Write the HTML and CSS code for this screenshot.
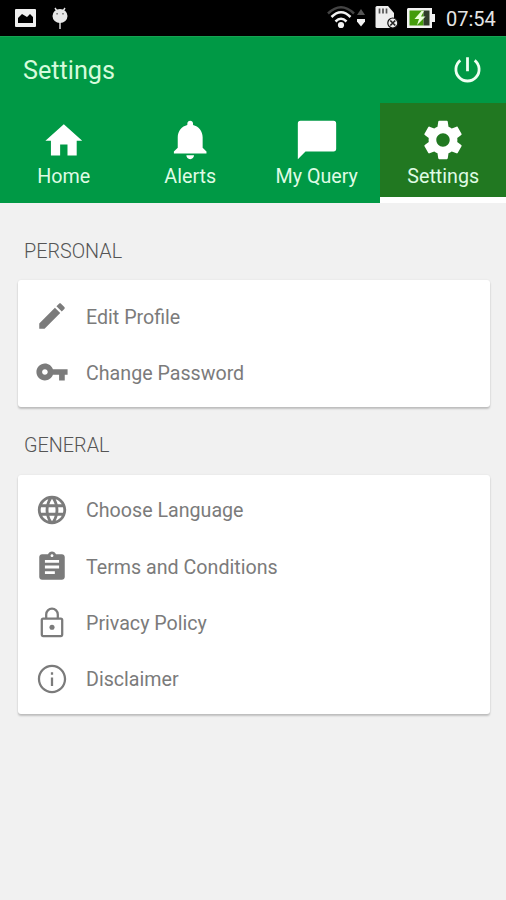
FILE: index.html
```html
<!DOCTYPE html>
<html lang="en">
<head>
<meta charset="utf-8">
<title>Settings</title>
<link rel="stylesheet" href="styles.css">
</head>
<body>
<div class="status">
  <svg class="s-image" width="21" height="18" viewBox="0 0 21 18"><path fill="#f0f0f0" fill-rule="evenodd" d="M1 0h19q1 0 1 1v16q0 1-1 1H1q-1 0-1-1V1q0-1 1-1zM3 14h15V8l-3-3-3 3-5-3-4 4z"/></svg>
  <svg class="s-droid" width="16" height="23" viewBox="0 0 16 23"><g stroke="#e8e8e8" stroke-width="1.400"><path d="M3 1l2 3M13 1l-2 3M8 15v7"/></g><ellipse cx="8" cy="9" rx="7.500" ry="7" fill="#e8e8e8"/><path fill="#777" d="M4.300 6h1.600v1.600H4.300zM10.200 6h1.600v1.600h-1.600z"/></svg>
  <span class="spacer"></span>
  <svg class="s-wifi" width="28" height="24" viewBox="0 0 28 24" fill="none" stroke-width="2.500"><path stroke="#444" d="M1 8.500Q14-4 27 8.500"/><path stroke="#f2f2f2" d="M4.500 12Q14 2.500 23.500 12M8.500 16.500Q14 11 19.500 16.500"/><circle cx="14" cy="20" r="3.100" fill="#f2f2f2"/></svg>
  <svg class="s-arrows" width="8" height="18" viewBox="0 0 8 18"><path fill="#555" d="M4 0l4 6H0z"/><path fill="#f2f2f2" d="M0 10h8v2.500L4 17.500 0 12.500z"/></svg>
  <svg class="s-sim" width="24" height="23" viewBox="0 0 24 23"><path fill="#eee" d="M2 0h11l6 7v15H2q-1.500 0-1.500-1.500V1.500Q.5 0 2 0z"/><path stroke="#555" stroke-width="1.700" d="M4.500 2.500v5M8 2.500v5M11.500 2.500v5"/><circle cx="17.800" cy="17" r="5" fill="#eee" stroke="#111" stroke-width="1.200"/><path stroke="#222" stroke-width="1.700" d="M15.300 14.500l5 5m0-5l-5 5"/></svg>
  <svg class="s-battery" width="29" height="20" viewBox="0 0 29 20"><path fill="#f2f2f2" d="M1 0h24v6h3v8h-3v6H0V1z"/><path fill="#449c0c" d="M2.500 2.500h14v15h-14z"/><path fill="#303d2b" d="M16.500 2.500h6v15h-6z"/><path fill="#eaffda" d="M14.500 3l-7 8h4.500l-2 6 8.500-8.500H14L17 3z"/></svg>
  <span class="clock">07:54</span>
</div>
<header class="bar">
  <h1>Settings</h1>
  <svg class="power" viewBox="0 0 28 28" fill="none" stroke="#effff2" stroke-width="2.800"><path d="M14 1.200v14M6.800 4.300a11.600 11.600 0 1 0 14.400 0"/></svg>
</header>
<nav class="tabs">
  <a class="tab"><svg viewBox="-.4 -.9 25 25"><path d="M10 20v-6h4v6h5v-8h3L12 3 2 12h3v8z"/></svg><span>Home</span></a>
  <a class="tab"><svg viewBox="-.6 0 24 24"><path d="M11.500 22c1.100 0 2-.9 2-2h-4c0 1.100.9 2 2 2zm6.500-6v-5.500c0-3.070-2.130-5.640-5-6.320V3.500c0-.83-.67-1.500-1.500-1.500S10 2.670 10 3.500v.68c-2.870.68-5 3.250-5 6.320V16l-2 2v1h17v-1z"/></svg><span>Alerts</span></a>
  <a class="tab"><svg viewBox="0 0 24 24"><path d="M20.600 2H3.400Q2 2 2 3.400V22l4-4h14.600q1.400 0 1.400-1.400V3.400Q22 2 20.600 2z"/></svg><span>My Query</span></a>
  <a class="tab active"><svg viewBox="0 0 24 24"><path d="M19.430 12.980c.04-.32.07-.64.07-.98s-.03-.66-.07-.98l2.110-1.650c.19-.15.24-.42.12-.64l-2-3.460c-.12-.22-.39-.3-.61-.22l-2.490 1c-.52-.4-1.080-.73-1.690-.98l-.38-2.650C14.460 2.180 14.250 2 14 2h-4c-.25 0-.46.18-.49.42l-.38 2.650c-.61.25-1.170.59-1.690.98l-2.490-1c-.23-.09-.49 0-.61.22l-2 3.460c-.13.22-.07.49.12.64l2.110 1.650c-.04.32-.07.65-.07.98s.03.66.07.98l-2.110 1.650c-.19.15-.24.42-.12.64l2 3.460c.12.22.39.3.61.22l2.490-1c.52.4 1.080.73 1.690.98l.38 2.650c.03.24.24.42.49.42h4c.25 0 .46-.18.49-.42l.38-2.650c.61-.25 1.170-.59 1.690-.98l2.490 1c.23.09.49 0 .61-.22l2-3.460c.12-.22.07-.49-.12-.64zM12 15.500c-1.930 0-3.500-1.570-3.500-3.500s1.570-3.500 3.500-3.500 3.500 1.570 3.500 3.500-1.570 3.500-3.500 3.500z"/></svg><span>Settings</span></a>
</nav>
<main>
  <h2>PERSONAL</h2>
  <ul class="card profile">
    <li><svg viewBox="0 0 24 24"><path d="M3 17.250V21h3.750L17.810 9.940l-3.750-3.750zM20.710 7.040c.39-.39.39-1.020 0-1.410l-2.340-2.340c-.39-.39-1.020-.39-1.410 0l-1.830 1.830 3.750 3.750z"/></svg><span>Edit Profile</span></li>
    <li><svg viewBox="0 0 24 24"><path d="M12.650 10C11.830 7.670 9.610 6 7 6c-3.310 0-6 2.690-6 6s2.690 6 6 6c2.610 0 4.830-1.670 5.650-4H17v4h4v-4h2v-4zM7 14c-1.100 0-2-.9-2-2s.9-2 2-2 2 .9 2 2-.9 2-2 2z"/></svg><span>Change Password</span></li>
  </ul>
  <h2>GENERAL</h2>
  <ul class="card">
    <li><svg viewBox="0 0 24 24"><path d="M11.990 2C6.470 2 2 6.480 2 12s4.470 10 9.990 10C17.520 22 22 17.520 22 12S17.520 2 11.990 2zm6.930 6h-2.950c-.32-1.250-.78-2.450-1.380-3.560 1.840.63 3.370 1.910 4.330 3.560zM12 4.040c.83 1.200 1.480 2.530 1.910 3.960h-3.820c.43-1.430 1.080-2.760 1.910-3.960zM4.260 14C4.100 13.360 4 12.690 4 12s.1-1.360.26-2h3.380c-.08.66-.14 1.320-.14 2s.06 1.340.14 2zm.82 2h2.950c.32 1.250.78 2.450 1.380 3.560-1.840-.63-3.370-1.900-4.330-3.560zm2.950-8H5.080c.96-1.660 2.490-2.930 4.330-3.560C8.810 5.550 8.350 6.750 8.030 8zM12 19.960c-.83-1.200-1.480-2.530-1.910-3.960h3.820c-.43 1.430-1.080 2.760-1.910 3.960zM14.340 14H9.660c-.09-.66-.16-1.320-.16-2s.07-1.350.16-2h4.680c.09.65.16 1.320.16 2s-.07 1.340-.16 2zm.25 5.560c.6-1.110 1.060-2.310 1.380-3.560h2.950c-.96 1.650-2.490 2.930-4.330 3.560zM16.360 14c.08-.66.14-1.320.14-2s-.06-1.340-.14-2h3.380c.16.64.26 1.310.26 2s-.1 1.360-.26 2z"/></svg><span>Choose Language</span></li>
    <li><svg viewBox="0 0 24 24"><path d="M19 3h-4.180C14.400 1.840 13.300 1 12 1c-1.300 0-2.400.84-2.820 2H5c-1.100 0-2 .9-2 2v14c0 1.100.9 2 2 2h14c1.100 0 2-.9 2-2V5c0-1.100-.9-2-2-2zm-7 0c.55 0 1 .45 1 1s-.45 1-1 1-1-.45-1-1 .45-1 1-1zm2 14H7v-2h7zm3-4H7v-2h10zm0-4H7V7h10z"/></svg><span>Terms and Conditions</span></li>
    <li><svg viewBox="0 0 24 24"><g fill="none" stroke="#7b7b7b" stroke-width="1.600"><rect x="4.800" y="8.900" width="14.400" height="12.300" rx="1"/><path d="M7.900 9V6a4.100 4.100 0 0 1 8.200 0v3"/></g><circle cx="12" cy="15" r="1.800"/></svg><span>Privacy Policy</span></li>
    <li><svg viewBox="0 0 24 24"><path d="M11.200 17h1.600v-6h-1.600zM12 2C6.480 2 2 6.480 2 12s4.480 10 10 10 10-4.480 10-10S17.520 2 12 2zm0 18.400c-4.640 0-8.400-3.760-8.400-8.400S7.360 3.600 12 3.600s8.400 3.760 8.400 8.400-3.760 8.400-8.400 8.400zM11.200 9h1.600V7.200h-1.600z"/></svg><span>Disclaimer</span></li>
  </ul>
</main>
</body>
</html>
```
FILE: styles.css
```css
* { box-sizing: border-box; }
body {
  margin: 0;
  height: 900px;
  overflow: hidden;
  background: #f1f1f1;
  font-family: Roboto, "Liberation Sans", sans-serif;
}
svg { display: block; flex: none; }
.status {
  height: 36px;
  background: #000;
  display: flex;
  align-items: flex-start;
  padding: 0 10px 0 15px;
}
.s-image { margin-top: 9px; }
.s-droid { margin: 7px 0 0 16px; }
.spacer { flex: 1; }
.s-wifi { margin-top: 5px; }
.s-arrows { margin: 9px 0 0 2px; }
.s-sim { margin: 6px 0 0 10px; }
.s-battery { margin: 8px 0 0 8px; }
.clock {
  width: 50px;
  margin-left: 10px;
  color: #e4e4e4;
  font-size: 20px;
  line-height: 38px;
  white-space: nowrap;
}
.bar {
  height: 67px;
  background: #009945;
  border-top: 1px solid #16a352;
  display: flex;
  align-items: center;
  justify-content: space-between;
  padding: 0 24px 0 23px;
}
h1 {
  margin: 1px 0 0;
  font-size: 25.200px;
  font-weight: 400;
  line-height: 30px;
  color: #d6fbdc;
}
.power { width: 29px; height: 28px; }
.tabs {
  height: 100px;
  display: grid;
  grid-template-columns: repeat(4, 1fr);
  background: #009945;
}
.tab {
  display: flex;
  flex-direction: column;
  align-items: center;
  padding: 14px 0 0 1px;
  color: #dffbe4;
  font-size: 19.700px;
  line-height: 24px;
}
.tab svg { width: 46px; height: 46px; fill: #fff; margin-bottom: 2px; }
.active {
  background: #217821;
  border-bottom: 6px solid #fff;
}
main { padding: 0 16px 0 18px; }
h2 {
  margin: 0;
  padding: 37px 0 16px 6px;
  font-size: 19.800px;
  font-weight: 300;
  line-height: 24px;
  color: #555;
}
.card {
  list-style: none;
  margin: 0;
  padding: 7px 0 7px 17px;
  background: #fff;
  border-radius: 3px;
  box-shadow: 0 2px 2px rgba(0, 0, 0, .2), 0 0 2px rgba(0, 0, 0, .08);
}
.profile { padding: 8px 0 7px 17px; }
.card + h2 { padding-top: 27px; padding-bottom: 17px; }
li {
  display: flex;
  align-items: center;
  height: 56.200px;
  color: #7b7b7b;
  font-size: 19.650px;
  line-height: 24px;
}
li span { margin-top: 2px; }
.profile span { margin-top: 3px; }
li svg { width: 34px; height: 34px; fill: #7b7b7b; margin-right: 17px; }
```
